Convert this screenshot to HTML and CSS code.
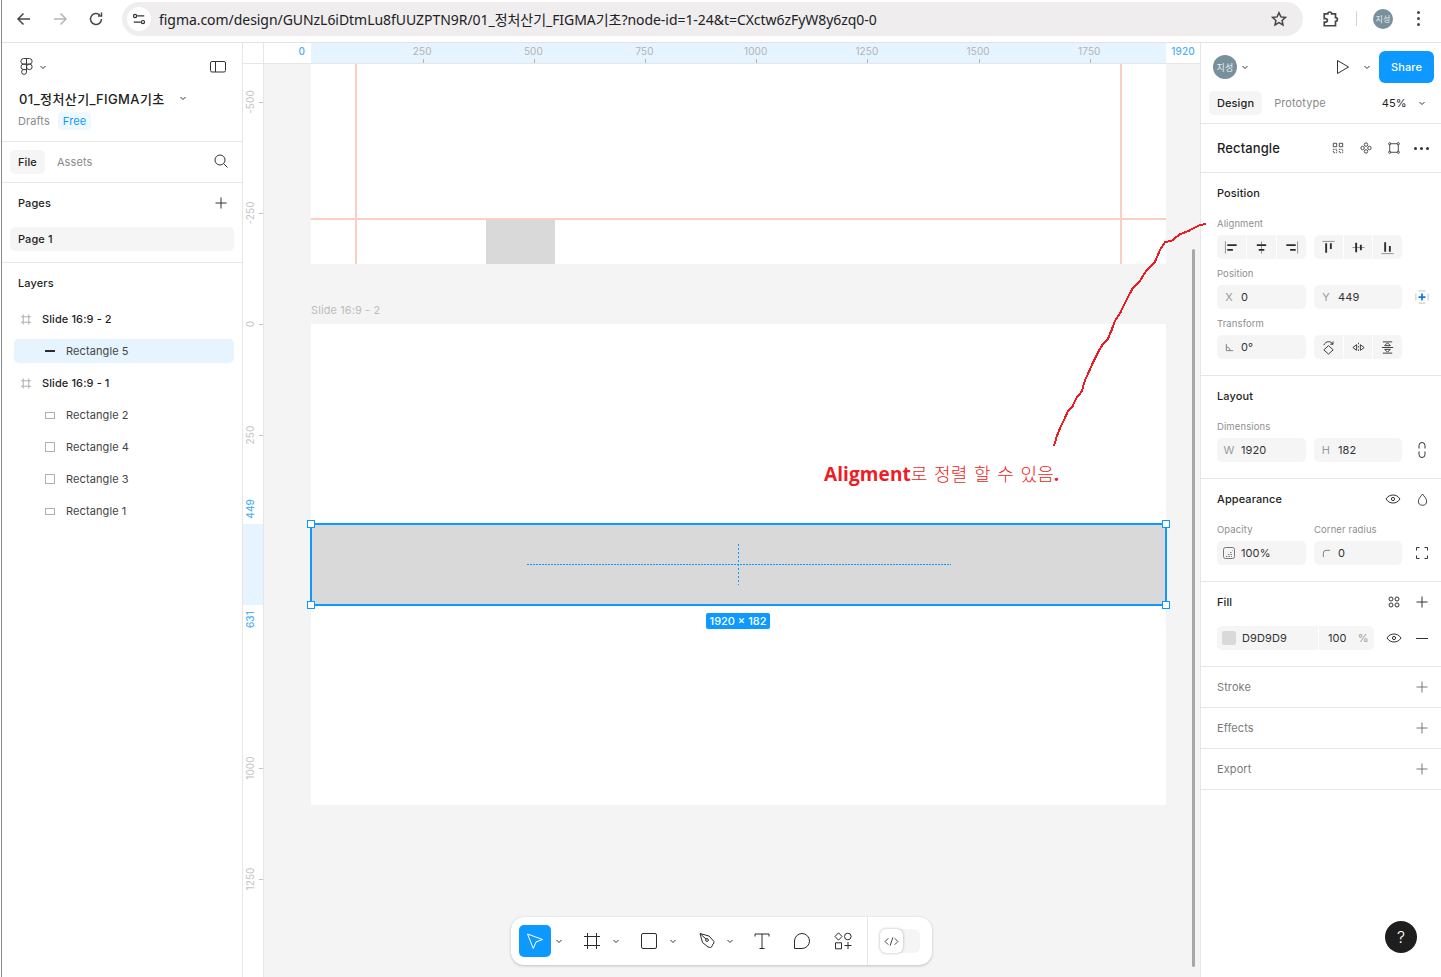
FILE: index.html
```html
<!DOCTYPE html>
<html lang="en">

<head>
    <meta charset="UTF-8">
    <title>01_정처산기_FIGMA기초 - Figma</title>
    <link rel="stylesheet" href="styles.css">
</head>

<body>
    <svg class="sprite" width="0" height="0">
        <symbol id="i-plus" viewBox="0 0 12 12"><path d="M6 .5v11M.5 6h11"/></symbol>
        <symbol id="i-chev" viewBox="0 0 8 8"><path d="M1.5 3l2.5 2.5L6.500 3"/></symbol>
        <symbol id="i-eye" viewBox="0 0 16 16"><path d="M1 8c1.800-2.800 4.200-4 7-4s5.200 1.200 7 4c-1.800 2.800-4.200 4-7 4s-5.200-1.200-7-4z"/><circle cx="8" cy="8" r="1.600"/></symbol>
        <symbol id="i-frame" viewBox="0 0 12 12"><path d="M3 .5v11M9 .5v11M.5 3h11M.5 9h11"/></symbol>
    </svg>

    <div class="page">

        <header class="browser">
            <svg class="bicon" viewBox="0 0 16 16"><path d="M14 8H2.500M7.500 2.500L2 8l5.500 5.500"/></svg>
            <svg class="bicon off" viewBox="0 0 16 16"><path d="M2 8h11.500M8.500 2.500L14 8l-5.500 5.500"/></svg>
            <svg class="bicon" viewBox="0 0 16 16"><path d="M13.500 8a5.500 5.500 0 1 1-1.700-4M13.500 1.500v3.500H10"/></svg>
            <div class="omnibox">
                <span class="site-chip">
                    <svg viewBox="0 0 16 16"><path d="M6 4.500h8M2 11.500h8"/><circle cx="3.500" cy="4.500" r="1.800"/><circle cx="12.500" cy="11.500" r="1.800"/></svg>
                </span>
                <span class="url">figma.com/design/GUNzL6iDtmLu8fUUZPTN9R/01_정처산기_FIGMA기초?node-id=1-24&amp;t=CXctw6zFyW8y6zq0-0</span>
                <svg class="bicon star" viewBox="0 0 16 16"><path d="M8 1.700l1.900 4.200 4.600.5-3.400 3.100.9 4.500-4-2.300-4 2.300.9-4.500L1.500 6.400l4.600-.5z"/></svg>
            </div>
            <svg class="bicon puzzle" viewBox="0 0 16 16"><path d="M2 3.500h3.200a1.700 1.700 0 0 1 3.400 0H12v3.200a1.700 1.700 0 0 1 0 3.400V14H2v-3.200h1.200a1.600 1.600 0 0 0 0-3.200H2z"/></svg>
            <span class="bar-sep"></span>
            <span class="avatar small">지성</span>
            <span class="kebab"><i></i><i></i><i></i></span>
        </header>

        <div class="app">

            <!-- left panel -->
            <aside class="left">
                <div class="file-head">
                    <div class="logo-row">
                        <svg class="logo" viewBox="0 0 16 18"><path d="M8 1H5a3 3 0 0 0 0 6h3zM8 1h3a3 3 0 0 1 0 6H8zM8 7H5a2.900 2.900 0 0 0 0 5.800h3zM8 12.800H5a2.600 2.600 0 1 0 3 2.600zM14 9.900a3 3 0 1 1-6 0 3 3 0 0 1 6 0z"/></svg>
                        <svg class="chev"><use href="#i-chev"/></svg>
                        <svg class="panel-toggle" viewBox="0 0 16 14"><rect x=".5" y="1.500" width="15" height="10.500" rx="1.500"/><path d="M5.500 1.500V12"/></svg>
                    </div>
                    <div class="file-name">01_정처산기_FIGMA기초 <svg class="chev"><use href="#i-chev"/></svg></div>
                    <div class="file-sub">Drafts <span class="badge">Free</span></div>
                </div>

                <div class="left-tabs">
                    <span class="pill on">File</span>
                    <span class="pill">Assets</span>
                    <svg class="search" viewBox="0 0 14 14"><circle cx="6" cy="6" r="5"/><path d="M9.600 9.600L13.500 13.500"/></svg>
                </div>

                <div class="pages">
                    <div class="panel-title">Pages <svg class="plus"><use href="#i-plus"/></svg></div>
                    <div class="page-row">Page 1</div>
                </div>

                <div class="layers">
                    <div class="panel-title">Layers</div>
                    <div class="layer frame"><svg class="lay-ic grid"><use href="#i-frame"/></svg>Slide 16:9 - 2</div>
                    <div class="layer child sel"><span class="lay-ic"><i class="shape line"></i></span>Rectangle 5</div>
                    <div class="layer frame"><svg class="lay-ic grid"><use href="#i-frame"/></svg>Slide 16:9 - 1</div>
                    <div class="layer child"><span class="lay-ic"><i class="shape wide"></i></span>Rectangle 2</div>
                    <div class="layer child"><span class="lay-ic"><i class="shape square"></i></span>Rectangle 4</div>
                    <div class="layer child"><span class="lay-ic"><i class="shape square"></i></span>Rectangle 3</div>
                    <div class="layer child"><span class="lay-ic"><i class="shape wide"></i></span>Rectangle 1</div>
                </div>
            </aside>

            <!-- canvas -->
            <main class="canvas">
                <div class="ruler-top">
                    <div class="corner"></div>
                    <div class="zero">0</div>
                    <div class="span-x">
                        <span class="mark">250</span><span class="mark">500</span><span class="mark">750</span><span class="mark">1000</span><span class="mark">1250</span><span class="mark">1500</span><span class="mark">1750</span>
                    </div>
                    <div class="end">1920</div>
                </div>

                <div class="ruler-left">
                    <div class="span-y"></div>
                    <span class="vmark blue m449">449</span>
                    <span class="vmark blue m631">631</span>
                    <div class="ticks">
                        <span class="ymark"><b>-500</b></span>
                        <span class="ymark"><b>-250</b></span>
                        <span class="ymark"><b>0</b></span>
                        <span class="ymark"><b>250</b></span>
                        <span class="ymark"></span>
                        <span class="ymark"></span>
                        <span class="ymark"><b>1000</b></span>
                        <span class="ymark"><b>1250</b></span>
                    </div>
                </div>

                <div class="slide slide-top">
                    <div class="gray-box"></div>
                    <div class="guide v g1"></div>
                    <div class="guide v g2"></div>
                    <div class="guide h"></div>
                </div>

                <div class="slide-label">Slide 16:9 - 2</div>
                <div class="slide slide-main">
                    <div class="picked">
                        <i class="handle tl"></i><i class="handle tr"></i><i class="handle bl"></i><i class="handle br"></i>
                        <i class="dots-h"></i><i class="dots-v"></i>
                    </div>
                    <div class="size-tag">1920 × 182</div>
                    <div class="note"><b>Aligment</b>로 정렬 할 수 있음<b>.</b></div>
                </div>

                <div class="scrollbar"></div>

                <div class="toolbar">
                    <span class="tool active">
                        <svg viewBox="0 0 20 20"><path d="M2.500 3l15 5.500-6.500 2.500-2.700 6.500z"/></svg>
                    </span>
                    <svg class="chev tool-chev"><use href="#i-chev"/></svg>
                    <span class="tool gap">
                        <svg viewBox="0 0 20 20"><path d="M5.500 2v16M14.500 2v16M2 5.500h16M2 14.500h16"/></svg>
                    </span>
                    <svg class="chev tool-chev"><use href="#i-chev"/></svg>
                    <span class="tool gap">
                        <svg viewBox="0 0 20 20"><rect x="2.500" y="2.500" width="15" height="15" rx="1.500"/></svg>
                    </span>
                    <svg class="chev tool-chev"><use href="#i-chev"/></svg>
                    <span class="tool gap">
                        <svg class="pen" viewBox="0 0 20 20"><path d="M2 2.500l9 2.500 5 5.500-.5 2.500-1 .5-.5 2-1.500 1-2.500-.5-5.500-4.500z"/><path d="M2 2.500L8 8"/><circle cx="9" cy="9" r="1.400"/></svg>
                    </span>
                    <svg class="chev tool-chev"><use href="#i-chev"/></svg>
                    <span class="tool gap8">
                        <svg viewBox="0 0 20 20"><path d="M3 5.500V3h14v2.500M10 3v14.500M7.500 17.500h5"/></svg>
                    </span>
                    <span class="tool gap8">
                        <svg viewBox="0 0 20 20"><path d="M2.500 17.500V10a7.500 7.500 0 1 1 7.500 7.500z"/></svg>
                    </span>
                    <span class="tool gap">
                        <svg viewBox="0 0 20 20"><path d="M5.500 1.800l3.500 3.700-3.500 3.700-3.500-3.700zM2.500 11.800h6v6h-6zM11.500 14.500h7M15 11v7"/><circle cx="14.800" cy="5.500" r="3.300"/></svg>
                    </span>
                    <span class="tool-sep"></span>
                    <span class="dev-toggle">
                        <span class="knob">
                            <svg viewBox="0 0 16 12"><path d="M4.500 2.500L1 6l3.500 3.500M11.500 2.500L15 6l-3.500 3.500M9.500 1.500l-3 9"/></svg>
                        </span>
                    </span>
                </div>
            </main>

            <!-- right panel -->
            <aside class="right">
                <div class="right-head">
                    <div class="share-row">
                        <span class="avatar">지성</span>
                        <svg class="chev"><use href="#i-chev"/></svg>
                        <svg class="play" viewBox="0 0 14 16"><path d="M1.500 1.500v13l11-6.500z"/></svg>
                        <svg class="chev"><use href="#i-chev"/></svg>
                        <span class="share">Share</span>
                    </div>
                    <div class="tab-row">
                        <span class="pill on">Design</span>
                        <span class="pill">Prototype</span>
                        <span class="zoom-val">45%</span>
                        <svg class="chev"><use href="#i-chev"/></svg>
                    </div>
                </div>

                <div class="sel-name">
                    <span>Rectangle</span>
                    <div class="sel-actions">
                        <svg viewBox="0 0 14 14"><path d="M1.500 1.500h4v4h-4zM8.500 1.500h4v4h-4z"/><path class="dash" d="M1.500 8.500h4v4h-4zM8.500 8.500h4v4h-4z"/></svg>
                        <svg viewBox="0 0 14 14"><circle cx="7" cy="3" r="2"/><circle cx="7" cy="11" r="2"/><circle cx="3" cy="7" r="2"/><circle cx="11" cy="7" r="2"/></svg>
                        <svg viewBox="0 0 14 14"><path d="M3 2h8M3 12h8M2 3v8M12 3v8"/><circle cx="2" cy="2" r="1.300"/><circle cx="12" cy="2" r="1.300"/><circle cx="2" cy="12" r="1.300"/><circle cx="12" cy="12" r="1.300"/></svg>
                        <span class="more"><i></i><i></i><i></i></span>
                    </div>
                </div>

                <section class="prop">
                    <h3>Position</h3>
                    <div class="lab">Alignment</div>
                    <div class="grid2">
                        <div class="seg">
                            <span><svg viewBox="0 0 16 16"><path class="thin" d="M1.500 1.500v13"/><path class="bar" d="M3.500 5.500h10M3.500 10.500h6"/></svg></span>
                            <span><svg viewBox="0 0 16 16"><path class="thin" d="M8 1.500v13"/><path class="bar" d="M3 5.500h10M5 10.500h6"/></svg></span>
                            <span><svg viewBox="0 0 16 16"><path class="thin" d="M14.500 1.500v13"/><path class="bar" d="M2.500 5.500h10M6.500 10.500h6"/></svg></span>
                        </div>
                        <div class="seg">
                            <span><svg viewBox="0 0 16 16"><path class="thin" d="M1.500 1.500h13"/><path class="bar" d="M5.500 3.500v10M10.500 3.500v6"/></svg></span>
                            <span><svg viewBox="0 0 16 16"><path class="thin" d="M1.500 8h13"/><path class="bar" d="M5.500 3v10M10.500 5v6"/></svg></span>
                            <span><svg viewBox="0 0 16 16"><path class="thin" d="M1.500 14.500h13"/><path class="bar" d="M5.500 2.500v10M10.500 6.500v6"/></svg></span>
                        </div>
                    </div>
                    <div class="lab gap">Position</div>
                    <div class="grid2">
                        <div class="field"><em>X</em>0</div>
                        <div class="field"><em>Y</em>449</div>
                        <svg class="constraint" viewBox="0 0 16 16"><path class="soft" d="M1 4v8M15 4v8M4 1h8M4 15h8"/><path class="blue" d="M8 4v8M4 8h8"/></svg>
                    </div>
                    <div class="lab gap">Transform</div>
                    <div class="grid2">
                        <div class="field"><em><svg viewBox="0 0 10 10"><path d="M1.500 1v7.500H9M1.500 4.500c2.500 0 4 1.500 4 4"/></svg></em>0°</div>
                        <div class="seg">
                            <span><svg viewBox="0 0 16 16"><path d="M8 6l5 4.500-5 4.500-5-4.500zM3 5.500C4 3 6 1.800 8 1.800s3.500.8 4.500 2.700M12.800 1.500v3h-3"/></svg></span>
                            <span><svg viewBox="0 0 16 16"><path d="M8 3v1.500M8 6.500v1.500M8 10v1.500M6 5v6L2 8zM10 5v6l4-3z"/></svg></span>
                            <span><svg viewBox="0 0 16 16"><path d="M2 8h12M5 6h6L8 3zM5 10h6l-3 3zM3 2h10M3 14h10"/></svg></span>
                        </div>
                    </div>
                </section>

                <section class="prop">
                    <h3>Layout</h3>
                    <div class="lab">Dimensions</div>
                    <div class="grid2">
                        <div class="field"><em>W</em>1920</div>
                        <div class="field"><em>H</em>182</div>
                        <svg class="link" viewBox="0 0 10 16"><path d="M2 6.500V3.500a3 3 0 0 1 6 0v3M2 9.500v3a3 3 0 0 0 6 0v-3"/></svg>
                    </div>
                </section>

                <section class="prop">
                    <h3>Appearance
                        <span class="h-icons">
                            <svg class="eye"><use href="#i-eye"/></svg>
                            <svg class="drop" viewBox="0 0 12 14"><path d="M6 1C4 4 1.500 6 1.500 8.800a4.500 4.500 0 0 0 9 0C10.500 6 8 4 6 1z"/></svg>
                        </span>
                    </h3>
                    <div class="grid2 labs">
                        <div class="lab">Opacity</div>
                        <div class="lab">Corner radius</div>
                    </div>
                    <div class="grid2">
                        <div class="field"><em><svg class="op" viewBox="0 0 12 12"><rect x=".5" y=".5" width="11" height="11" rx="2"/><path class="dash" d="M3 9.500h6M5 7.500h4M7 5.500h2M9 3.500h.5"/></svg></em>100%</div>
                        <div class="field"><em><svg viewBox="0 0 10 10"><path d="M1.500 9V4.500a3 3 0 0 1 3-3H9"/></svg></em>0</div>
                        <svg class="corners" viewBox="0 0 12 12"><path d="M.5 3.500v-3h3M8.500.5h3v3M11.500 8.500v3h-3M3.500 11.500h-3v-3"/></svg>
                    </div>
                </section>

                <section class="prop">
                    <h3>Fill
                        <span class="h-icons">
                            <svg class="styles" viewBox="0 0 12 12"><circle cx="3" cy="3" r="2"/><circle cx="9" cy="3" r="2"/><circle cx="3" cy="9" r="2"/><circle cx="9" cy="9" r="2"/></svg>
                            <svg class="plus"><use href="#i-plus"/></svg>
                        </span>
                    </h3>
                    <div class="fill-row">
                        <div class="fill-box">
                            <i class="swatch"></i>
                            <span class="hex">D9D9D9</span>
                            <span class="pct">100<em>%</em></span>
                        </div>
                        <svg class="eye"><use href="#i-eye"/></svg>
                        <span class="minus"></span>
                    </div>
                </section>

                <section class="prop closed"><h3>Stroke <svg class="plus"><use href="#i-plus"/></svg></h3></section>
                <section class="prop closed"><h3>Effects <svg class="plus"><use href="#i-plus"/></svg></h3></section>
                <section class="prop closed"><h3>Export <svg class="plus"><use href="#i-plus"/></svg></h3></section>
            </aside>
        </div>

        <div class="help">?</div>

        <!-- hand drawn red arrow line on top of everything -->
        <svg class="scribble" viewBox="0 0 510 735">
            <polyline points="42,708 50,680 60,655 72,630 84,603 98,588 110,563 125,545 135,510 147,485 160,455 175,425 187,405 203,388 215,360 225,332 240,310 262,265 278,235 300,212 320,180 345,155 360,120 375,97 395,92 420,73 445,63 480,45 498,42"/>
        </svg>
    </div>
</body>

</html>
```

FILE: styles.css
```css
* {
    box-sizing: border-box;
}

html, body {
    margin: 0;
    height: 100%;
    overflow: hidden;
    background: #ffffff;
}

body {
    font-family: Inter, "Noto Sans CJK KR", sans-serif;
    font-size: 11px;
    letter-spacing: .1px;
    color: #1e1e1e;
}

svg {
    fill: none;
    stroke: #333333;
    stroke-width: 1;
    display: block;
    flex: none;
}

.sprite {
    position: absolute;
}

.page {
    position: relative;
    width: 1440px;
    height: 977px;
    margin-left: 1px;
    border-left: 1px solid #8a8a8a;
    overflow: hidden;
}

/* browser bar */
.browser {
    height: 43px;
    display: flex;
    align-items: center;
    padding: 0 0 5px 14px;
    border-bottom: 1px solid #e3e3e3;
}

.bicon {
    width: 16px;
    height: 16px;
    margin-right: 20px;
    stroke: #474747;
    stroke-width: 1.5;
}

.bicon.off {
    stroke: #b5b5b5;
}

.omnibox {
    width: 1181px;
    height: 34px;
    margin-left: -2px;
    border-radius: 17px;
    background: #efedee;
    display: flex;
    align-items: center;
    padding-left: 5px;
    position: relative;
}

.site-chip {
    width: 24px;
    height: 24px;
    border-radius: 50%;
    background: #ffffff;
    display: flex;
    align-items: center;
    justify-content: center;
}

.site-chip svg {
    width: 14px;
    height: 14px;
    stroke: #333333;
    stroke-width: 1.4;
}

.url {
    margin-left: 8px;
    font-family: "Noto Sans", "Noto Sans CJK KR", sans-serif;
    font-size: 14px;
    letter-spacing: -.05px;
    color: #202124;
    white-space: nowrap;
}

.star {
    position: absolute;
    right: 16px;
    top: 9px;
    margin: 0;
    stroke-width: 1.5;
}

.puzzle {
    margin: 0 0 0 19px;
    width: 18px;
    height: 18px;
}

.bar-sep {
    width: 1px;
    height: 15px;
    margin-left: 16px;
    background: #d5d5d5;
}

.avatar {
    width: 24px;
    height: 24px;
    border-radius: 50%;
    background: #78909c;
    color: #e9eef0;
    font-size: 9px;
    display: flex;
    align-items: center;
    justify-content: center;
    flex: none;
}

.avatar.small {
    width: 20px;
    height: 20px;
    margin-left: 16px;
    font-size: 8px;
}

.kebab {
    margin-left: 24px;
    display: flex;
    flex-direction: column;
    gap: 3px;
}

.kebab i {
    width: 3px;
    height: 3px;
    border-radius: 50%;
    background: #474747;
}

/* app */
.app {
    display: flex;
    height: 934px;
}

.left {
    width: 241px;
    flex: none;
    border-right: 1px solid #e6e6e6;
}

.chev {
    width: 8px;
    height: 8px;
    stroke: #333333;
}

.plus {
    width: 12px;
    height: 12px;
    stroke: #333333;
}

.file-head {
    height: 99px;
    padding: 0 16px;
    border-bottom: 1px solid #e6e6e6;
}

.logo-row {
    height: 46px;
    display: flex;
    align-items: center;
    padding-top: 1px;
}

.logo {
    width: 15px;
    height: 18px;
    margin: 0 5px 1px 1px;
}

.panel-toggle {
    width: 16px;
    height: 14px;
    margin-left: auto;
    margin-right: 0;
}

.file-name {
    height: 18px;
    display: flex;
    align-items: center;
    font-size: 13px;
    font-weight: 500;
    letter-spacing: .4px;
    padding-left: 1px;
}

.file-name .chev {
    margin-left: 14px;
}

.file-sub {
    margin-top: 5px;
    display: flex;
    align-items: center;
    color: #8a8a8a;
}

.badge {
    margin-left: 8px;
    padding: 2px 5px;
    border-radius: 4px;
    background: #eef8ff;
    color: #0d99ff;
}

.left-tabs {
    height: 41px;
    display: flex;
    align-items: center;
    padding: 0 0 1px 8px;
    border-bottom: 1px solid #e6e6e6;
    position: relative;
}

.pill {
    height: 24px;
    padding: 0 8px;
    border-radius: 5px;
    display: flex;
    align-items: center;
    color: #8a8a8a;
    margin-right: 4px;
}

.pill.on {
    background: #f5f5f5;
    color: #1e1e1e;
    font-weight: 500;
}

.search {
    width: 14px;
    height: 14px;
    position: absolute;
    right: 14px;
    top: 12px;
}

.panel-title {
    height: 40px;
    padding: 0 15px 0 16px;
    display: flex;
    align-items: center;
    justify-content: space-between;
    font-weight: 500;
}

.pages {
    height: 80px;
    border-bottom: 1px solid #e6e6e6;
}

.page-row {
    height: 24px;
    margin: 4px 8px 0;
    padding-left: 8px;
    border-radius: 5px;
    background: #f5f5f5;
    display: flex;
    align-items: center;
    font-weight: 500;
}

.layers .panel-title {
    margin-bottom: 4px;
}

.layer {
    height: 24px;
    margin: 0 8px 8px 12px;
    border-radius: 5px;
    display: flex;
    align-items: center;
    color: #444444;
}

.layer.frame {
    color: #1e1e1e;
    font-weight: 500;
}

.layer.child {
    padding-left: 24px;
}

.layer.sel {
    background: #e5f4ff;
}

.lay-ic {
    width: 24px;
    margin-right: 4px;
    display: flex;
    justify-content: center;
    align-items: center;
}

.lay-ic.grid {
    height: 11px;
    stroke: #a8a8a8;
}

.shape {
    display: block;
    width: 10px;
    border: 1px solid #b0b0b0;
}

.shape.wide {
    height: 7px;
}

.shape.square {
    height: 10px;
}

.shape.line {
    height: 2px;
    border: 0;
    background: #2c2c2c;
}

/* canvas */
.canvas {
    position: relative;
    flex: 1;
    background: #f4f4f4;
    overflow: hidden;
}

.ruler-top {
    height: 21px;
    background: #ffffff;
    border-bottom: 1px solid #e6e6e6;
    display: flex;
    position: relative;
    z-index: 3;
}

.corner {
    width: 21px;
    border-right: 1px solid #e6e6e6;
}

.zero, .end {
    color: #4db0f5;
    font-size: 10px;
    font-weight: 500;
    padding-top: 2px;
}

.zero {
    width: 47px;
    padding-right: 6px;
    text-align: right;
}

.end {
    flex: 1;
    text-align: center;
}

.span-x {
    width: 855px;
    flex: none;
    background: #e5f4ff;
    display: flex;
    padding-left: 55.600px;
}

.mark {
    width: 111.200px;
    color: #b3b3b3;
    font-size: 10px;
    text-align: center;
    padding-top: 2px;
    position: relative;
}

.mark::after {
    content: "";
    position: absolute;
    left: 56px;
    bottom: 0;
    width: 1px;
    height: 4px;
    background: #b3b3b3;
}

.ruler-left {
    position: absolute;
    left: 0;
    top: 21px;
    bottom: 0;
    width: 21px;
    background: #ffffff;
    border-right: 1px solid #e6e6e6;
    overflow: hidden;
    z-index: 2;
}

.span-y {
    position: absolute;
    left: 0;
    top: 460px;
    width: 20px;
    height: 81px;
    background: #e5f4ff;
}

.ticks {
    display: flex;
    flex-direction: column;
    margin-top: -17.500px;
}

.ymark {
    height: 111px;
    flex: none;
    position: relative;
    color: #c4c4c4;
    font-size: 10px;
}

.ymark b {
    font-weight: 400;
    position: absolute;
    left: 1px;
    top: 55px;
    writing-mode: vertical-rl;
    transform: translateY(-50%) rotate(180deg);
    line-height: 12px;
}

.ymark::after {
    content: "";
    position: absolute;
    right: 0;
    top: 55px;
    width: 4px;
    height: 1px;
    background: #c4c4c4;
}

.ymark:nth-child(5)::after, .ymark:nth-child(6)::after {
    display: none;
}

.vmark {
    position: absolute;
    left: 1px;
    writing-mode: vertical-rl;
    transform: rotate(180deg);
    font-size: 10px;
    font-weight: 500;
    line-height: 12px;
}

.vmark.blue {
    color: #4db0f5;
}

.m449 {
    top: 435px;
}

.m631 {
    top: 547px;
}

.slide {
    position: absolute;
    left: 68px;
    width: 855px;
    background: #ffffff;
}

.slide-top {
    top: 21px;
    height: 200px;
}

.slide-main {
    top: 281px;
    height: 481px;
}

.slide-label {
    position: absolute;
    left: 68px;
    top: 260px;
    color: #bdbdbd;
    line-height: 14px;
}

.gray-box {
    position: absolute;
    left: 175px;
    top: 155px;
    width: 69px;
    height: 45px;
    background: #d9d9d9;
}

.guide {
    position: absolute;
    background: #fbcdc3;
}

.guide.v {
    top: 0;
    bottom: 0;
    width: 2px;
}

.guide.g1 {
    left: 44px;
}

.guide.g2 {
    left: 809px;
}

.guide.h {
    left: 0;
    right: 0;
    top: 154px;
    height: 2px;
}

.picked {
    position: absolute;
    left: 0;
    top: 200px;
    width: 855px;
    height: 81px;
    background: #d9d9d9;
    outline: 2px solid #0d99ff;
    outline-offset: -1px;
}

.handle {
    position: absolute;
    width: 8px;
    height: 8px;
    background: #ffffff;
    border: 1px solid #0d99ff;
}

.handle.tl { left: -4px; top: -4px; }
.handle.tr { right: -4px; top: -4px; }
.handle.bl { left: -4px; bottom: -4px; }
.handle.br { right: -4px; bottom: -4px; }

.dots-h {
    position: absolute;
    left: 216px;
    top: 40px;
    width: 424px;
    height: 1px;
    background: repeating-linear-gradient(to right, #0d99ff 0 2px, transparent 2px 3px);
}

.dots-v {
    position: absolute;
    left: 427px;
    top: 20px;
    width: 1px;
    height: 41px;
    background: repeating-linear-gradient(to bottom, #0d99ff 0 2px, transparent 2px 4px);
}

.size-tag {
    position: absolute;
    left: 395px;
    top: 289px;
    width: 64px;
    height: 16px;
    border-radius: 2px;
    background: #0d99ff;
    color: #ffffff;
    font-weight: 500;
    letter-spacing: 0;
    text-align: center;
    line-height: 16px;
}

.note {
    position: absolute;
    left: 513px;
    top: 136px;
    color: #ee1c25;
    font-family: "Noto Sans CJK KR", sans-serif;
    font-size: 18px;
    font-weight: 300;
    line-height: 26px;
    word-spacing: 2.500px;
    white-space: nowrap;
}

.note b {
    font-family: "Open Sans", sans-serif;
    font-size: 19px;
    font-weight: 700;
}

.scrollbar {
    position: absolute;
    left: 949px;
    top: 206px;
    width: 3px;
    height: 718px;
    background: #a8a8a8;
    border-radius: 2px;
}

.toolbar {
    position: absolute;
    left: 268px;
    top: 874px;
    width: 421px;
    height: 48px;
    border-radius: 13px;
    background: #ffffff;
    box-shadow: 0 1px 3px rgba(0, 0, 0, .2), 0 0 1px rgba(0, 0, 0, .1);
    display: flex;
    align-items: center;
    padding-left: 8px;
}

.tool {
    width: 32px;
    height: 32px;
    flex: none;
    border-radius: 5px;
    display: flex;
    align-items: center;
    justify-content: center;
}

.tool svg {
    width: 20px;
    height: 20px;
    stroke: #2c2c2c;
}

.tool svg.pen {
    margin-left: 3px;
}

.tool.active {
    background: #0d99ff;
}

.tool.active svg {
    stroke: #ffffff;
}

.tool.gap {
    margin-left: 9px;
}

.tool.gap8 {
    margin-left: 8px;
}

.tool-chev {
    margin: 0 4px;
}

.tool-sep {
    width: 1px;
    height: 48px;
    margin-left: 8px;
    background: #e6e6e6;
}

.dev-toggle {
    width: 40px;
    height: 24px;
    margin-left: 12px;
    border-radius: 6px;
    background: #f5f5f5;
}

.knob {
    width: 23px;
    height: 24px;
    border-radius: 6px;
    background: #ffffff;
    box-shadow: 0 0 3px rgba(0, 0, 0, .3);
    display: flex;
    align-items: center;
    justify-content: center;
}

.knob svg {
    width: 15px;
    height: 11px;
}

.help {
    position: absolute;
    left: 1383px;
    top: 921px;
    width: 32px;
    height: 32px;
    border-radius: 50%;
    background: #1e1e1e;
    color: #ffffff;
    font-size: 16px;
    font-weight: 300;
    text-align: center;
    line-height: 32px;
    z-index: 4;
}

/* right panel */
.right {
    width: 241px;
    flex: none;
    border-left: 1px solid #e6e6e6;
    background: #ffffff;
}

.right-head {
    height: 81px;
    border-bottom: 1px solid #e6e6e6;
}

.share-row {
    height: 48px;
    display: flex;
    align-items: center;
    padding: 0 7px 0 12px;
}

.share-row .chev:nth-of-type(1) {
    margin-left: 4px;
}

.play {
    width: 14px;
    height: 16px;
    margin-left: 87px;
}

.share-row .chev:last-of-type {
    margin-left: 13px;
}

.share {
    margin-left: 8px;
    width: 55px;
    height: 32px;
    border-radius: 6px;
    background: #0d99ff;
    color: #ffffff;
    font-weight: 500;
    display: flex;
    align-items: center;
    justify-content: center;
}

.tab-row {
    display: flex;
    align-items: center;
    padding-left: 8px;
}

.zoom-val {
    margin-left: 44px;
}

.tab-row .chev {
    margin-left: 11px;
}

.sel-name {
    height: 49px;
    padding: 0 12px 0 16px;
    display: flex;
    align-items: center;
    justify-content: space-between;
    border-bottom: 1px solid #e6e6e6;
    font-size: 13px;
    font-weight: 500;
}

.sel-actions {
    display: flex;
    align-items: center;
    gap: 16px;
}

.sel-actions svg {
    width: 12px;
    height: 12px;
}

.dash {
    stroke-dasharray: 1.500 1;
}

.more {
    display: flex;
    gap: 3px;
    margin-left: -2px;
}

.more i {
    width: 3px;
    height: 3px;
    border-radius: 50%;
    background: #333333;
}

.prop {
    padding: 0 16px 16px;
    border-bottom: 1px solid #e6e6e6;
}

.prop h3 {
    margin: 0;
    height: 40px;
    font-size: 11px;
    font-weight: 500;
    display: flex;
    align-items: center;
    justify-content: space-between;
}

.h-icons {
    display: flex;
    align-items: center;
    gap: 16px;
    margin-right: -3px;
}

.lab {
    height: 22px;
    line-height: 22px;
    font-size: 9.500px;
    color: #8f8f8f;
}

.lab.gap {
    margin-top: 4px;
}

.grid2 {
    display: grid;
    grid-template-columns: 89px 88px 24px;
    column-gap: 8px;
    align-items: center;
}

.seg {
    height: 24px;
    display: flex;
    gap: 1px;
    border-radius: 5px;
    overflow: hidden;
}

.seg span {
    flex: 1;
    background: #f5f5f5;
    display: flex;
    align-items: center;
    justify-content: center;
}

.seg svg {
    width: 15px;
    height: 15px;
}

.seg .thin {
    stroke: #8f8f8f;
}

.seg .bar {
    stroke: #2c2c2c;
    stroke-width: 2;
}

.field {
    height: 24px;
    border-radius: 5px;
    background: #f5f5f5;
    display: flex;
    align-items: center;
    color: #333333;
}

.field em {
    width: 24px;
    flex: none;
    display: flex;
    justify-content: center;
    font-style: normal;
    color: #9a9a9a;
}

.field em svg {
    width: 9px;
    height: 9px;
    stroke: #777777;
}

.field em svg.op {
    width: 12px;
    height: 12px;
}

.constraint {
    width: 14px;
    height: 14px;
    justify-self: center;
}

.constraint .soft {
    stroke: #bbbbbb;
}

.constraint .blue {
    stroke: #0d7de0;
    stroke-width: 2;
}

.link {
    width: 10px;
    height: 16px;
    justify-self: center;
}

.corners {
    width: 12px;
    height: 12px;
    justify-self: center;
}

.eye {
    width: 16px;
    height: 16px;
}

.drop {
    width: 11px;
    height: 13px;
}

.styles {
    width: 12px;
    height: 12px;
}

.fill-row {
    margin-top: 4px;
    display: flex;
    align-items: center;
}

.fill-box {
    width: 157px;
    height: 24px;
    flex: none;
    border-radius: 5px;
    background: #f5f5f5;
    display: flex;
    align-items: center;
    padding-left: 5px;
}

.swatch {
    width: 14px;
    height: 14px;
    border-radius: 2px;
    background: #d9d9d9;
}

.hex {
    margin-left: 6px;
    width: 77px;
    height: 24px;
    line-height: 24px;
    color: #333333;
    border-right: 1px solid #ffffff;
}

.pct {
    margin-left: 9px;
    color: #333333;
}

.pct em {
    font-style: normal;
    color: #9a9a9a;
    margin-left: 11px;
}

.fill-row .eye {
    margin-left: 12px;
}

.minus {
    width: 12px;
    height: 1px;
    flex: none;
    margin-left: 14px;
    background: #333333;
}

.prop.closed {
    padding-bottom: 0;
    color: #777777;
}

.prop.closed h3 {
    font-weight: 400;
    color: #7a7a7a;
}

.prop.closed .plus {
    stroke: #777777;
}

.prop h3 > .plus {
    margin-right: -3px;
}

.scribble {
    position: absolute;
    left: 1038px;
    top: 210px;
    width: 170px;
    height: 245px;
    pointer-events: none;
    z-index: 5;
}

.scribble polyline {
    stroke: #ed1c24;
    stroke-width: 6;
    fill: none;
    shape-rendering: crispEdges;
}
```
